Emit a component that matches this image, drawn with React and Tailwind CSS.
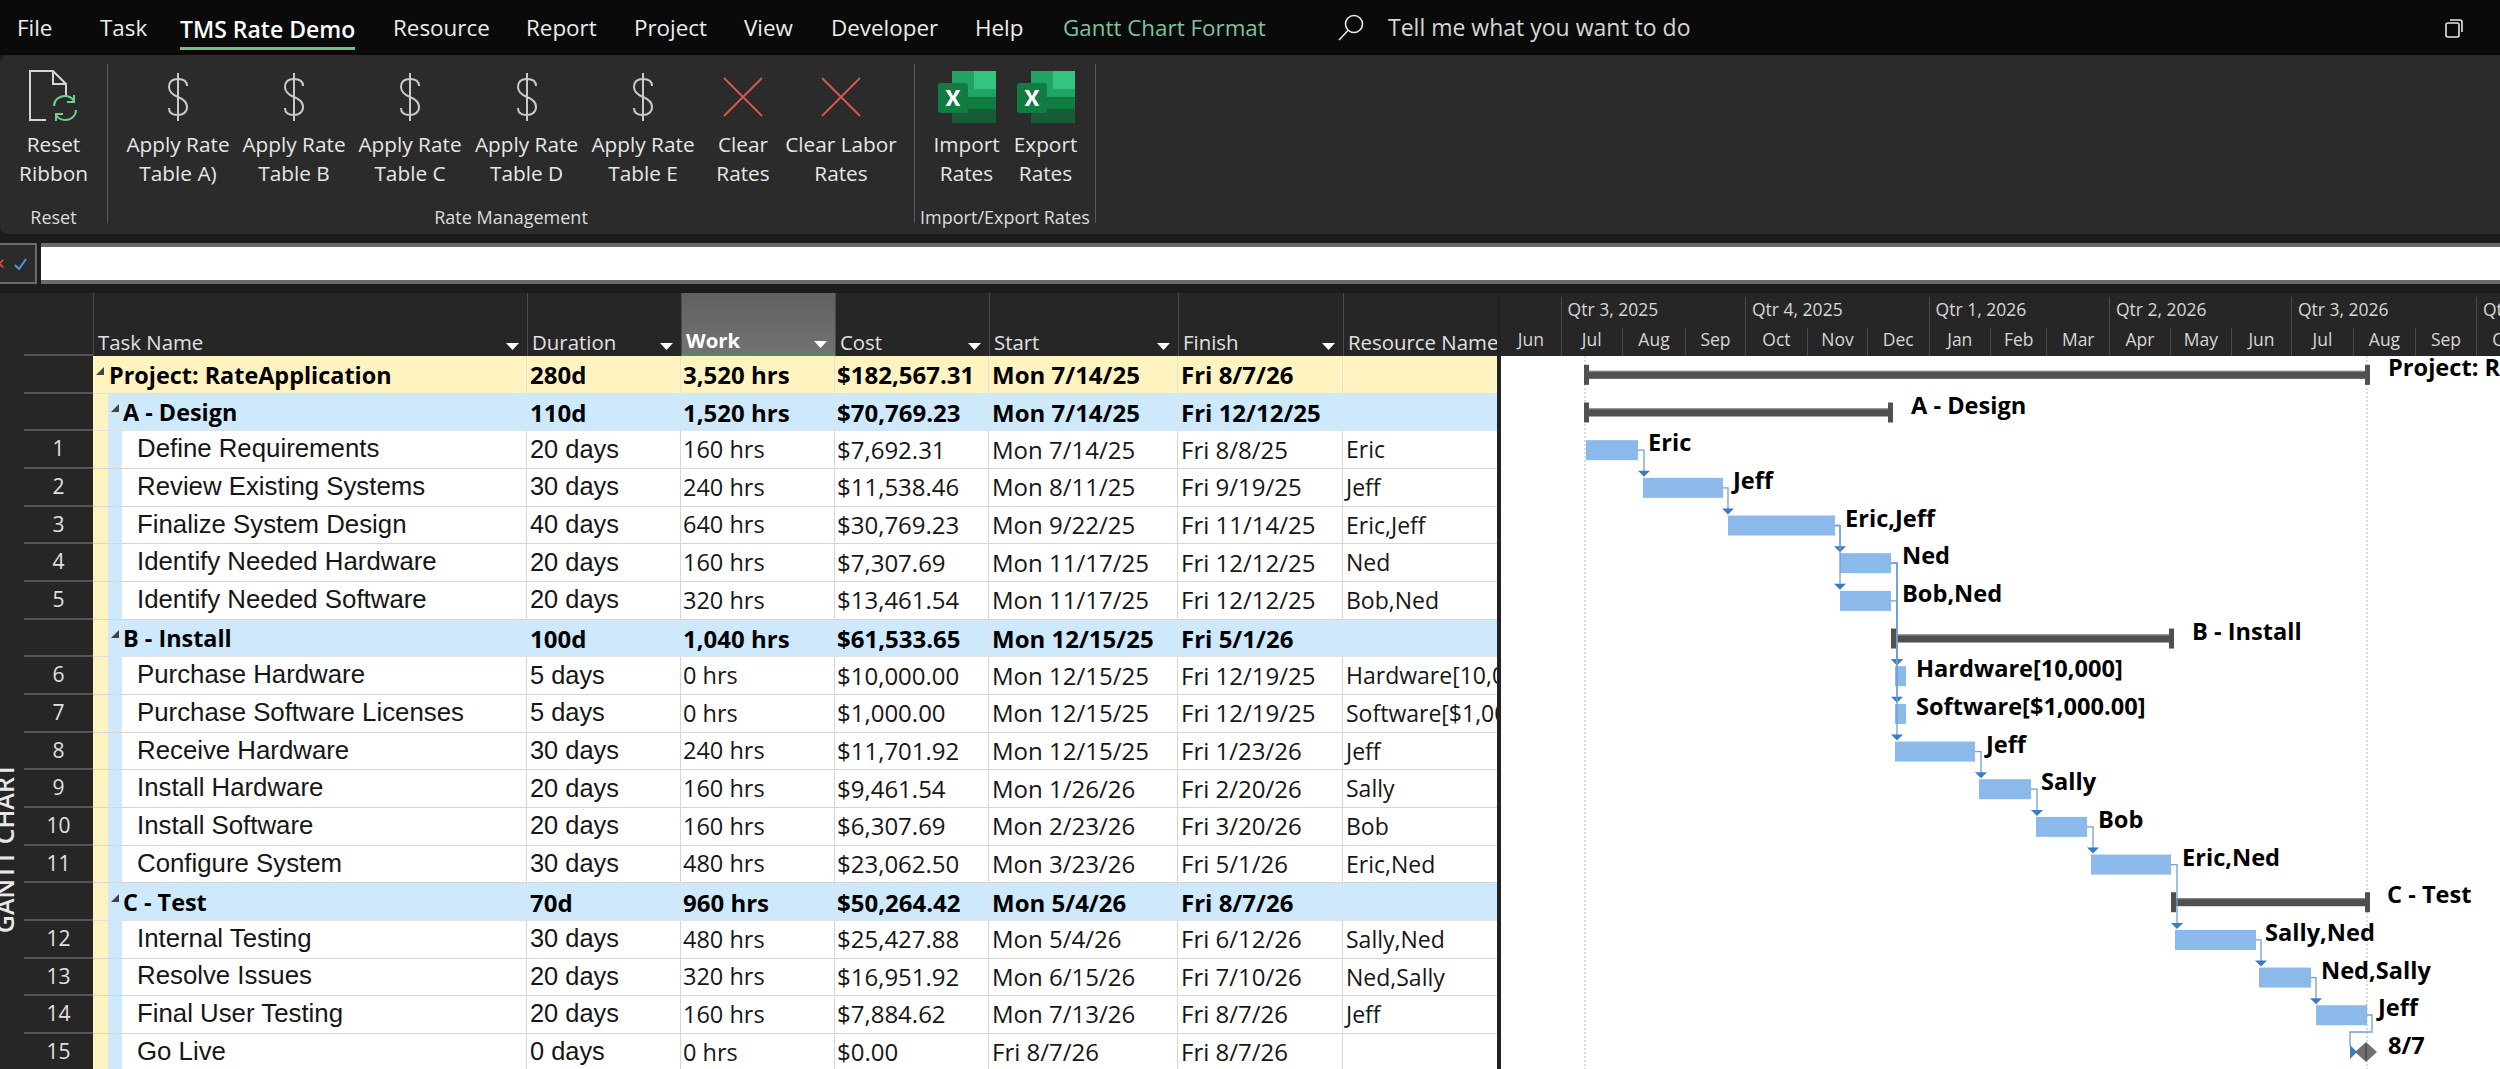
import React from 'react';

const TABS = [
  { label: 'File', w: 'w-[83px]' },
  { label: 'Task', w: 'w-[80px]' },
  { label: 'TMS Rate Demo', w: 'w-[213px]', active: true },
  { label: 'Resource', w: 'w-[133px]' },
  { label: 'Report', w: 'w-[108px]' },
  { label: 'Project', w: 'w-[110px]' },
  { label: 'View', w: 'w-[87px]' },
  { label: 'Developer', w: 'w-[144px]' },
  { label: 'Help', w: 'w-[88px]' },
  { label: 'Gantt Chart Format', w: 'w-[274px]', green: true },
];

const ROWS = [
  { kind: 'project', name: 'Project: RateApplication', dur: '280d', work: '3,520 hrs', cost: '$182,567.31', start: 'Mon 7/14/25', finish: 'Fri 8/7/26' },
  { kind: 'summary', name: 'A - Design', dur: '110d', work: '1,520 hrs', cost: '$70,769.23', start: 'Mon 7/14/25', finish: 'Fri 12/12/25' },
  { id: 1, name: 'Define Requirements', dur: '20 days', work: '160 hrs', cost: '$7,692.31', start: 'Mon 7/14/25', finish: 'Fri 8/8/25', res: 'Eric' },
  { id: 2, name: 'Review Existing Systems', dur: '30 days', work: '240 hrs', cost: '$11,538.46', start: 'Mon 8/11/25', finish: 'Fri 9/19/25', res: 'Jeff' },
  { id: 3, name: 'Finalize System Design', dur: '40 days', work: '640 hrs', cost: '$30,769.23', start: 'Mon 9/22/25', finish: 'Fri 11/14/25', res: 'Eric,Jeff' },
  { id: 4, name: 'Identify Needed Hardware', dur: '20 days', work: '160 hrs', cost: '$7,307.69', start: 'Mon 11/17/25', finish: 'Fri 12/12/25', res: 'Ned' },
  { id: 5, name: 'Identify Needed Software', dur: '20 days', work: '320 hrs', cost: '$13,461.54', start: 'Mon 11/17/25', finish: 'Fri 12/12/25', res: 'Bob,Ned' },
  { kind: 'summary', name: 'B - Install', dur: '100d', work: '1,040 hrs', cost: '$61,533.65', start: 'Mon 12/15/25', finish: 'Fri 5/1/26' },
  { id: 6, name: 'Purchase Hardware', dur: '5 days', work: '0 hrs', cost: '$10,000.00', start: 'Mon 12/15/25', finish: 'Fri 12/19/25', res: 'Hardware[10,000]' },
  { id: 7, name: 'Purchase Software Licenses', dur: '5 days', work: '0 hrs', cost: '$1,000.00', start: 'Mon 12/15/25', finish: 'Fri 12/19/25', res: 'Software[$1,000.00]' },
  { id: 8, name: 'Receive Hardware', dur: '30 days', work: '240 hrs', cost: '$11,701.92', start: 'Mon 12/15/25', finish: 'Fri 1/23/26', res: 'Jeff' },
  { id: 9, name: 'Install Hardware', dur: '20 days', work: '160 hrs', cost: '$9,461.54', start: 'Mon 1/26/26', finish: 'Fri 2/20/26', res: 'Sally' },
  { id: 10, name: 'Install Software', dur: '20 days', work: '160 hrs', cost: '$6,307.69', start: 'Mon 2/23/26', finish: 'Fri 3/20/26', res: 'Bob' },
  { id: 11, name: 'Configure System', dur: '30 days', work: '480 hrs', cost: '$23,062.50', start: 'Mon 3/23/26', finish: 'Fri 5/1/26', res: 'Eric,Ned' },
  { kind: 'summary', name: 'C - Test', dur: '70d', work: '960 hrs', cost: '$50,264.42', start: 'Mon 5/4/26', finish: 'Fri 8/7/26' },
  { id: 12, name: 'Internal Testing', dur: '30 days', work: '480 hrs', cost: '$25,427.88', start: 'Mon 5/4/26', finish: 'Fri 6/12/26', res: 'Sally,Ned' },
  { id: 13, name: 'Resolve Issues', dur: '20 days', work: '320 hrs', cost: '$16,951.92', start: 'Mon 6/15/26', finish: 'Fri 7/10/26', res: 'Ned,Sally' },
  { id: 14, name: 'Final User Testing', dur: '20 days', work: '160 hrs', cost: '$7,884.62', start: 'Mon 7/13/26', finish: 'Fri 8/7/26', res: 'Jeff' },
  { id: 15, name: 'Go Live', dur: '0 days', work: '0 hrs', cost: '$0.00', start: 'Fri 8/7/26', finish: 'Fri 8/7/26', res: '' },
];

const HEADERS = [
  { label: 'Task Name', w: 'w-[434px]' },
  { label: 'Duration', w: 'w-[154px]' },
  { label: 'Work', w: 'w-[154px]', hot: true },
  { label: 'Cost', w: 'w-[154px]' },
  { label: 'Start', w: 'w-[189px]' },
  { label: 'Finish', w: 'w-[165px]' },
  { label: 'Resource Name', w: 'w-[154px]', noArrow: true },
];

const QUARTERS = [
  { label: '', w: 59.6 },
  { label: 'Qtr 3, 2025', w: 184.4 },
  { label: 'Qtr 4, 2025', w: 183.6 },
  { label: 'Qtr 1, 2026', w: 180.4 },
  { label: 'Qtr 2, 2026', w: 182 },
  { label: 'Qtr 3, 2026', w: 185 },
  { label: 'Qtr 4, 2026', w: 60 },
];

const MONTHS = [
  ['Jun', 59.6], ['Jul', 61.4], ['Aug', 63], ['Sep', 60], ['Oct', 62], ['Nov', 60], ['Dec', 61.6],
  ['Jan', 61.4], ['Feb', 56.5], ['Mar', 62.5], ['Apr', 61], ['May', 61], ['Jun', 60], ['Jul', 62],
  ['Aug', 62], ['Sep', 61], ['Oct', 60],
];

const rowY = (r) => 356 + 37.67 * (r + 0.5);

// bars are in page pixels, the svg below shifts them back
const BARS = [
  [2, 1586, 1638], [3, 1643, 1723], [4, 1728, 1835], [5, 1840, 1891], [6, 1840, 1891],
  [8, 1895, 1906], [9, 1895, 1906], [10, 1895, 1975], [11, 1979, 2031], [12, 2036, 2087],
  [13, 2091, 2171], [15, 2175, 2256], [16, 2259, 2311], [17, 2316, 2367],
];

const SUMMARIES = [
  [0, 1584, 2370], [1, 1584, 1893], [7, 1891, 2174], [14, 2171, 2370],
];

const LINKS = [
  [1638, 2, 1644, 3], [1723, 3, 1728, 4], [1835, 4, 1840, 5], [1835, 4, 1840, 6],
  [1891, 5, 1897, 8], [1891, 6, 1897, 8], [1891, 5, 1897, 9], [1891, 5, 1897, 10],
  [1975, 10, 1981, 11], [2031, 11, 2037, 12], [2087, 12, 2093, 13], [2171, 13, 2177, 15],
  [2256, 15, 2261, 16], [2311, 16, 2316, 17],
];

const LABELS = [
  [0, 2388, 'Project: RateApplication'], [1, 1911, 'A - Design'], [2, 1648, 'Eric'], [3, 1733, 'Jeff'],
  [4, 1845, 'Eric,Jeff'], [5, 1902, 'Ned'], [6, 1902, 'Bob,Ned'], [7, 2192, 'B - Install'],
  [8, 1916, 'Hardware[10,000]'], [9, 1916, 'Software[$1,000.00]'], [10, 1986, 'Jeff'], [11, 2041, 'Sally'],
  [12, 2098, 'Bob'], [13, 2182, 'Eric,Ned'], [14, 2387, 'C - Test'], [15, 2265, 'Sally,Ned'],
  [16, 2321, 'Ned,Sally'], [17, 2378, 'Jeff'], [18, 2388, '8/7'],
];

const DollarIcon = () => (
  <svg width="24" height="50" viewBox="0 0 24 50" fill="none" stroke="#c9c9c9" strokeWidth="2">
    <path d="M12 1V49" />
    <path d="M21 14C21 9 17 7 12 7C6 7 3 10 3 15C3 20 7 23 12 25C17 27 21 30 21 35C21 40 17 43 12 43C7 43 3 41 3 36" />
  </svg>
);

const ClearIcon = () => (
  <svg width="40" height="40" viewBox="0 0 40 40" stroke="#d9574f" strokeWidth="1.8">
    <path d="M1 1L39 39M39 1L1 39" />
  </svg>
);

const ExcelIcon = () => (
  <svg width="58" height="52" viewBox="0 0 58 52">
    <rect x="14" y="0" width="44" height="52" rx="3" fill="#21a366" />
    <rect x="36" y="0" width="22" height="18" fill="#33c481" />
    <rect x="14" y="0" width="22" height="18" fill="#21a366" />
    <rect x="14" y="26" width="44" height="26" fill="#107c41" />
    <rect x="14" y="38" width="44" height="14" rx="2" fill="#185c37" />
    <rect x="36" y="26" width="22" height="12" fill="#107c41" />
    <rect x="0" y="12" width="30" height="30" rx="3" fill="#107c41" />
    <path d="M7.5 19H12L15 25L18 19H22.5L17.5 27L22.5 35H18L15 29L12 35H7.5L12.5 27Z" fill="#fff" />
  </svg>
);

const ResetIcon = () => (
  <svg width="52" height="54" viewBox="0 0 52 54" fill="none">
    <path d="M18 50H2V1H25L38 14V26M25 1V14H38" stroke="#d6d6d6" strokeWidth="2" />
    <path d="M26 36C26 30 31 26 37 26C41 26 44 28 46 31M46 25V32H39" stroke="#6fcf8b" strokeWidth="2" />
    <path d="M48 40C48 46 43 50 37 50C33 50 30 48 28 45M28 51V44H35" stroke="#6fcf8b" strokeWidth="2" />
  </svg>
);

const RibbonButton = ({ w, icon, lines }) => (
  <div className={`${w} flex flex-col items-center`}>
    <div className="h-[66px] flex items-center justify-center">{icon}</div>
    {lines.map((t) => (
      <div key={t} className="h-[29px] leading-[29px] text-[20.8px] text-[#e6e6e6] whitespace-nowrap">{t}</div>
    ))}
  </div>
);

const RibbonGroup = ({ w, pad, label, children }) => (
  <div className={`${w} h-[159px] flex flex-col border-r border-[#5a5a5a]`}>
    <div className={`flex ${pad}`}>{children}</div>
    <div className="mt-auto -mb-[8px] h-[28px] leading-[28px] text-center text-[18px] text-[#dcdcdc] whitespace-nowrap">{label}</div>
  </div>
);

const Ribbon = () => (
  <div className="h-[179px] bg-[#2b2b2b] rounded-l-lg py-[9px] flex">
    <RibbonGroup w="w-[108px]" pad="" label="Reset">
      <RibbonButton w="w-[107px]" icon={<ResetIcon />} lines={['Reset', 'Ribbon']} />
    </RibbonGroup>
    <RibbonGroup w="w-[807px]" pad="pl-[12px]" label="Rate Management">
      <RibbonButton w="w-[116px]" icon={<DollarIcon />} lines={['Apply Rate', 'Table A)']} />
      <RibbonButton w="w-[116px]" icon={<DollarIcon />} lines={['Apply Rate', 'Table B']} />
      <RibbonButton w="w-[116px]" icon={<DollarIcon />} lines={['Apply Rate', 'Table C']} />
      <RibbonButton w="w-[117px]" icon={<DollarIcon />} lines={['Apply Rate', 'Table D']} />
      <RibbonButton w="w-[116px]" icon={<DollarIcon />} lines={['Apply Rate', 'Table E']} />
      <RibbonButton w="w-[84px]" icon={<ClearIcon />} lines={['Clear', 'Rates']} />
      <RibbonButton w="w-[112px]" icon={<ClearIcon />} lines={['Clear Labor', 'Rates']} />
    </RibbonGroup>
    <RibbonGroup w="w-[181px]" pad="pl-[12px]" label="Import/Export Rates">
      <RibbonButton w="w-[79px]" icon={<ExcelIcon />} lines={['Import', 'Rates']} />
      <RibbonButton w="w-[79px]" icon={<ExcelIcon />} lines={['Export', 'Rates']} />
    </RibbonGroup>
  </div>
);

const TopBar = () => (
  <div className="h-[55px] bg-[#0a0a0a] flex items-center pl-[17px] text-[22.4px]">
    {TABS.map((t) => (
      <div key={t.label} className={`${t.w} shrink-0 whitespace-nowrap`}>
        <span className={t.active ? 'inline-block mt-[7px] pb-[1px] border-b-[3px] border-[#73c08a] font-semibold text-[23px] text-white' : t.green ? 'text-[#7fc29a]' : 'text-[#ececec]'}>
          {t.label}
        </span>
      </div>
    ))}
    <svg width="27" height="27" viewBox="0 0 27 27" fill="none" stroke="#e6e6e6" strokeWidth="1.6" className="shrink-0">
      <circle cx="17" cy="10" r="8.5" />
      <path d="M11 16.5L2 26" />
    </svg>
    <div className="ml-[24px] text-[23px] text-[#d6d6d6] whitespace-nowrap">Tell me what you want to do</div>
    <svg width="20" height="20" viewBox="0 0 20 20" fill="none" stroke="#e6e6e6" strokeWidth="1.6" className="ml-auto mr-[36px]">
      <rect x="2" y="5" width="13" height="14" rx="2" />
      <path d="M6 2H16C17.5 2 18 3 18 4V14" />
    </svg>
  </div>
);

const FormulaBar = () => (
  <div className="h-[41px] mt-[9px] flex gap-[4px]">
    <div className="w-[37px] border-y-[2px] border-r-[2px] border-[#6a6a6a] bg-[#2b2b2b] flex items-center justify-end pr-[8px] gap-[8px] text-[15px] overflow-hidden">
      <span className="text-[#d9574f] -ml-[8px]">✕</span>
      <svg width="13" height="12" viewBox="0 0 13 12" fill="none" stroke="#4f9bd9" strokeWidth="2"><path d="M1 7L5 11L12 1" /></svg>
    </div>
    <div className="flex-1 bg-white border-y-[4px] border-[#6a6a6a]" />
  </div>
);

const Outline = () => (
  <svg width="8" height="8" viewBox="0 0 8 8" className="shrink-0 -mt-[7px]"><path d="M8 0V8H0Z" fill="#444" /></svg>
);

const Row = ({ row }) => {
  const text = row.kind ? 'font-bold text-[24px] text-black pt-[2px]' : 'text-[24px] text-[#161616]';
  const bg = row.kind === 'project' ? 'bg-[#fff3c0]' : row.kind === 'summary' ? 'bg-[#cfe9fc]' : 'bg-white';
  const line = row.kind ? 'border-[#dfe3e3]' : 'border-[#d6d6d6]';
  const cell = `h-full flex items-center border-r ${line} whitespace-nowrap overflow-hidden`;
  return (
    <div className="h-[37.67px] flex">
      <div className="w-[69px] shrink-0 flex items-center justify-center border-b-2 border-[#555] bg-[#262626] text-[21px] text-[#e0e0e0]">
        {row.id}
      </div>
      <div className={`flex-1 flex border-b ${line} ${row.kind === 'project' ? 'bg-[#fff3c0]' : 'bg-white'}`}>
        <div className={`w-[434px] shrink-0 ${cell}`}>
          {row.kind === 'project' ? (
            <div className="flex items-center pl-[3px] gap-[5px]">
              <Outline />
              <span className="font-bold text-[23.4px] text-black pt-[2px]">{row.name}</span>
            </div>
          ) : row.kind === 'summary' ? (
            <>
              <div className="w-[15px] h-full shrink-0 bg-[#fff3c0]" />
              <div className={`flex-1 h-full flex items-center pl-[3px] gap-[4px] ${bg}`}>
                <Outline />
                <span className="font-bold text-[23.4px] text-black pt-[2px]">{row.name}</span>
              </div>
            </>
          ) : (
            <>
              <div className="w-[15px] h-full shrink-0 bg-[#fff3c0]" />
              <div className="w-[14px] h-full shrink-0 bg-[#cfe9fc]" />
              <span className="pl-[15px] pb-[2px] font-['Liberation_Sans',sans-serif] text-[25.8px] text-[#161616]">{row.name}</span>
            </>
          )}
        </div>
        <div className={`w-[154px] shrink-0 pl-[3px] ${cell} ${bg} ${row.kind ? '' : "font-['Liberation_Sans',sans-serif]"}`}>
          <span className={row.kind ? text : 'pb-[2px] text-[25.4px] text-[#161616]'}>{row.dur}</span>
        </div>
        <div className={`w-[154px] shrink-0 pl-[2px] ${cell} ${bg}`}><span className={row.kind ? text : 'text-[23.5px] text-[#161616]'}>{row.work}</span></div>
        <div className={`w-[154px] shrink-0 pl-[2px] ${cell} ${bg}`}><span className={text}>{row.cost}</span></div>
        <div className={`w-[189px] shrink-0 pl-[3px] ${cell} ${bg}`}><span className={text}>{row.start}</span></div>
        <div className={`w-[165px] shrink-0 pl-[3px] ${cell} ${bg}`}><span className={text}>{row.finish}</span></div>
        <div className={`w-[154px] shrink-0 pl-[3px] ${cell} ${bg} border-r-0`}><span className="text-[23px] text-[#161616]">{row.res}</span></div>
      </div>
    </div>
  );
};

const TableHeader = () => (
  <div className="h-[63px] flex text-[20.4px] text-[#e0e0e0] bg-[#262626]">
    <div className="w-[69px] shrink-0 border-b-2 border-[#555]" />
    {HEADERS.map((h) => (
      <div
        key={h.label}
        className={`${h.w} shrink-0 flex items-end justify-between pl-[4px] pr-[8px] border-l border-[#4a4a4a] whitespace-nowrap overflow-hidden ${h.hot ? 'bg-gradient-to-b from-[#606060] to-[#727272] font-bold text-white border-b-2 border-b-[#4b8f5c]' : ''}`}
      >
        <span className="leading-[28px]">{h.label}</span>
        {!h.noArrow && (
          <svg width="13" height="7" viewBox="0 0 13 7" className="mb-[6px] shrink-0"><path d="M0 0H13L6.5 7Z" fill="#fff" /></svg>
        )}
      </div>
    ))}
  </div>
);

const GanttHeader = () => (
  <div className="h-[63px] bg-[#262626] overflow-hidden text-[17.5px] text-[#d6d6d6]">
    <div className="h-[35px] pt-[4px] flex">
      {QUARTERS.map((q, i) => (
        <div key={i} className={`shrink-0 pl-[6px] leading-[24px] whitespace-nowrap ${i ? 'border-l border-[#4a4a4a]' : ''}`} style={{ width: q.w }}>
          {q.label}
        </div>
      ))}
    </div>
    <div className="h-[28px] flex">
      {MONTHS.map(([m, w], i) => (
        <div key={i} className={`shrink-0 text-center leading-[22px] ${i ? 'border-l border-[#4a4a4a]' : ''}`} style={{ width: w }}>
          {m}
        </div>
      ))}
    </div>
  </div>
);

const Gantt = () => (
  <svg width="999" height="713" className="block bg-white">
    <g transform="translate(-1501 -356)">
      <path d="M1585 356V1069M2367 356V1069" stroke="#b5b5b5" strokeDasharray="2 2" />
      {BARS.map(([r, a, b]) => (
        <rect key={r} x={a} y={rowY(r) - 10} width={b - a} height="20" fill="#8ab9ea" />
      ))}
      {SUMMARIES.map(([r, a, b]) => (
        <g key={r} fill="#505050">
          <rect x={a} y={rowY(r) - 4} width={b - a} height="8" />
          <rect x={a} y={rowY(r) - 4} width={b - a} height="1" fill="#8a8a8a" />
          <rect x={a} y={rowY(r) - 10} width="5" height="20" />
          <rect x={b - 5} y={rowY(r) - 10} width="5" height="20" />
        </g>
      ))}
      {LINKS.map(([x1, r1, x2, r2], i) => {
        const y2 = rowY(r2) - 11;
        return (
          <g key={i}>
            <path d={`M${x1} ${rowY(r1)}H${x2}V${y2 - 4}`} fill="none" stroke="#6f9fd6" strokeWidth="1.3" />
            <path d={`M${x2 - 6} ${y2 - 6}H${x2 + 6}L${x2} ${y2}Z`} fill="#3a7cc3" />
          </g>
        );
      })}
      <path d="M2367 1015H2372V1032H2350V1046" fill="none" stroke="#6f9fd6" strokeWidth="1.3" />
      <path d="M2350 1045L2357 1052L2350 1059Z" fill="#3a7cc3" />
      <path d="M2366 1042L2377 1052L2366 1062L2355 1052Z" fill="#707070" />
      <path d="M2366 1044V1060" stroke="#333" />
      {LABELS.map(([r, x, t]) => (
        <text key={r} x={x} y={rowY(r) + 1} fontFamily="Open Sans" fontWeight="700" fontSize="23.6" fill="#000">{t}</text>
      ))}
    </g>
  </svg>
);

export default function App() {
  return (
    <div className="w-[2500px] h-[1069px] overflow-hidden bg-[#1c1c1c] font-['Open_Sans',sans-serif]">
      <TopBar />
      <Ribbon />
      <FormulaBar />
      <div className="h-[785px] mt-[9px] flex">
        <div className="w-[24px] shrink-0 bg-[#262626] flex items-end pb-[145px] overflow-hidden">
          <div className="-ml-[14px] [writing-mode:vertical-rl] rotate-180 whitespace-nowrap text-[25px] font-semibold text-[#e8e8e8]">GANTT CHART</div>
        </div>
        <div className="w-[1473px] shrink-0">
          <TableHeader />
          {ROWS.map((r) => <Row key={r.name} row={r} />)}
        </div>
        <div className="w-[4px] shrink-0 bg-[#222]" />
        <div className="flex-1 min-w-0 overflow-hidden">
          <GanttHeader />
          <Gantt />
        </div>
      </div>
    </div>
  );
}
